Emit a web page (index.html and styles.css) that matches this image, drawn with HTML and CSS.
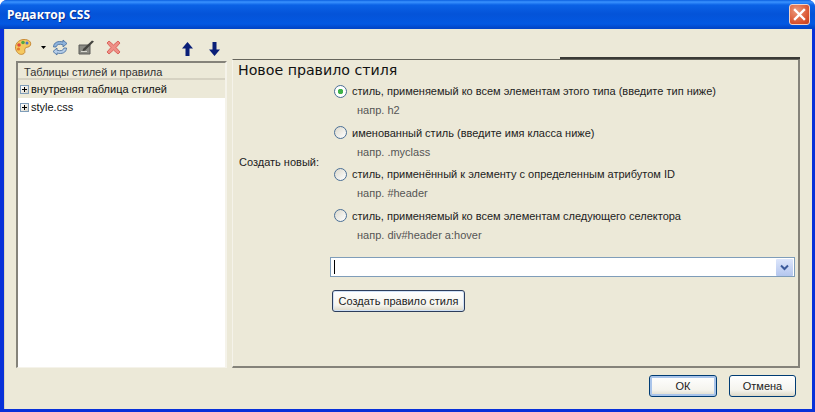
FILE: index.html
```html
<!DOCTYPE html>
<html lang="ru">
<head>
<meta charset="utf-8">
<title>Редактор CSS</title>
<link rel="stylesheet" href="styles.css">
</head>
<body>
<div class="window">
  <header class="titlebar">
    <span class="title">Редактор CSS</span>
    <span class="close"><svg width="13" height="13" viewBox="0 0 13 13"><path d="M2 2 L11 11 M11 2 L2 11" stroke="#fff" stroke-width="2.4" stroke-linecap="square"/></svg></span>
  </header>
  <div class="client">
    <div class="toolbar">
      <div class="tools-left">
        <svg class="ic-palette" width="18" height="18" viewBox="0 0 18 18"><path d="M2 12 C0 7 4 1.500 10 1.500 C15 1.500 17.500 4 16.500 7 C15.500 10 12 8.500 11 10.500 C10 12.500 12 14 10 15.500 C7 17.500 3.500 16 2 12Z" fill="#f5c95f" stroke="#c98a35"/><circle cx="5" cy="7" r="1.800" fill="#e04a3a"/><circle cx="9" cy="4.500" r="1.800" fill="#57a845"/><circle cx="13" cy="5" r="1.500" fill="#4a74c9"/><circle cx="4.500" cy="11" r="1.600" fill="#e8792c"/></svg>
        <svg class="ic-caret" width="5" height="3" viewBox="0 0 5 3"><path d="M0 0H5L2.500 3Z" fill="#000"/></svg>
        <svg class="ic-refresh" width="16" height="17" viewBox="0 0 16 17"><path d="M1.500 8 C1.500 3.500 6 1.500 11 3 L11 1 L15 4.500 L11 8 L11 5.800 C7.500 4.600 4.500 5.500 4 8Z" fill="#8fb4dc" stroke="#41699c" stroke-width=".8"/><path d="M14.500 9 C14.500 13.500 10 15.500 5 14 L5 16 L1 12.500 L5 9 L5 11.200 C8.500 12.400 11.500 11.500 12 9Z" fill="#b5cde8" stroke="#41699c" stroke-width=".8"/></svg>
        <svg class="ic-edit" width="17" height="16" viewBox="0 0 17 16"><path d="M1 6H12V15H1Z" fill="#8b8b84" stroke="#5d5d58"/><path d="M5 10 L14 1.500 L16 2.500 L7 11.500 L4.500 12Z" fill="#44443f"/><path d="M3 12.500H9" stroke="#d8d8d0"/></svg>
        <svg class="ic-delete" width="15" height="15" viewBox="0 0 15 15"><path d="M3 1 L7.500 5 L12 1 L14 3 L10 7.500 L14 12 L12 14 L7.500 10 L3 14 L1 12 L5 7.500 L1 3Z" fill="#ef8f86" stroke="#d9665c"/></svg>
      </div>
      <div class="tools-right">
        <svg width="11" height="14" viewBox="0 0 11 14"><path d="M5.500 0 L11 6.500 H7.500 V14 H3.500 V6.500 H0Z" fill="#0a1f78"/></svg>
        <svg width="11" height="14" viewBox="0 0 11 14"><path d="M5.500 14 L11 7.500 H7.500 V0 H3.500 V7.500 H0Z" fill="#0a1f78"/></svg>
      </div>
      <div class="tab-line"></div>
    </div>
    <div class="panes">
      <section class="tree">
        <div class="tree-head">Таблицы стилей и правила</div>
        <div class="tree-row selected"><span class="expander"></span>внутреняя таблица стилей</div>
        <div class="tree-row"><span class="expander"></span>style.css</div>
      </section>
      <section class="editor">
        <h1 class="heading">Новое правило стиля</h1>
        <div class="form">
          <div class="form-label">Создать новый:</div>
          <div class="options">
            <div class="option">
              <div class="option-main"><span class="radio checked"></span>стиль, применяемый ко всем элементам этого типа (введите тип ниже)</div>
              <div class="hint">напр. h2</div>
            </div>
            <div class="option">
              <div class="option-main"><span class="radio"></span>именованный стиль (введите имя класса ниже)</div>
              <div class="hint">напр. .myclass</div>
            </div>
            <div class="option">
              <div class="option-main"><span class="radio"></span>стиль, применённый к элементу с определенным атрибутом ID</div>
              <div class="hint">напр. #header</div>
            </div>
            <div class="option">
              <div class="option-main"><span class="radio"></span>стиль, применяемый ко всем элементам следующего селектора</div>
              <div class="hint">напр. div#header a:hover</div>
            </div>
          </div>
        </div>
        <div class="combo">
          <span class="caret"></span>
          <span class="combo-btn"><svg width="9" height="7" viewBox="0 0 9 7"><path d="M1 1.500 L4.500 5 L8 1.500" fill="none" stroke="#3b5a9a" stroke-width="2"/></svg></span>
        </div>
        <button class="btn create">Создать правило стиля</button>
      </section>
    </div>
    <footer class="footer">
      <button class="btn ok">ОК</button>
      <button class="btn cancel">Отмена</button>
    </footer>
  </div>
</div>
</body>
</html>
```

FILE: styles.css
```css
* { box-sizing: border-box; }
html, body { margin: 0; padding: 0; }
body {
  width: 815px;
  height: 412px;
  overflow: hidden;
  font-family: "Liberation Sans", "Noto Sans", sans-serif;
  font-size: 11px;
  color: #222;
}
.window {
  width: 815px;
  height: 412px;
  display: flex;
  flex-direction: column;
  background: #0831d9;
  border-radius: 7px 7px 0 0;
}
.titlebar {
  height: 29px;
  flex: none;
  display: flex;
  align-items: center;
  justify-content: space-between;
  padding: 0 5px 0 7px;
  border-radius: 7px 7px 0 0;
  background: linear-gradient(#0a5fe0 0, #3a93ff 2px, #0a62e6 5px, #0453d8 14px, #0358e2 24px, #0246c8 28px);
}
.title {
  font-family: "Noto Sans", "Liberation Sans", sans-serif;
  font-weight: 700;
  font-size: 12px;
  letter-spacing: .15px;
  color: #fff;
  text-shadow: 1px 1px 0 #0a2d8c;
}
.close {
  width: 21px;
  height: 21px;
  display: flex;
  align-items: center;
  justify-content: center;
  border: 1px solid #f3d3c6;
  border-radius: 3px;
  background: radial-gradient(circle at 35% 30%, #ec9a7c, #d9512c 70%, #c0401e);
}
.client {
  flex: 1;
  display: flex;
  flex-direction: column;
  margin: 0 3px 3px 4px;
  padding: 0 12px 0 11px;
  background: #ece9d8;
  border-left: 1px solid #d8d4c2;
}
.toolbar {
  position: relative;
  height: 30px;
  flex: none;
  display: flex;
  align-items: flex-end;
  padding-bottom: 3px;
}
.tools-left {
  display: flex;
  align-items: center;
  width: 163px;
}
.ic-palette { margin-left: -2px; }
.ic-caret { margin: 0 6px 0 9px; }
.ic-edit { margin-left: 10px; }
.ic-delete { margin-left: 11px; }
.tools-right { display: flex; gap: 16px; margin-left: 3px; }
.tab-line {
  position: absolute;
  right: 0;
  bottom: 0;
  width: 240px;
  height: 2px;
  background: #3a3a36;
}
.panes {
  flex: 1;
  display: flex;
  gap: 5px;
  min-height: 0;
}
.tree {
  width: 211px;
  flex: none;
  margin-top: 2px;
  background: #fff;
  border-top: 2px solid #85837a;
  border-left: 2px solid #85837a;
  border-right: 2px solid #f5f3ea;
  border-bottom: 1px solid #f5f3ea;
}
.tree-head {
  height: 17px;
  padding-left: 6px;
  line-height: 19px;
  background: #ece9d8;
  border-bottom: 2px solid #d6d2c2;
  color: #333;
}
.tree-row {
  height: 18px;
  line-height: 18px;
  display: flex;
  align-items: center;
  color: #111;
}
.tree-row.selected { background: #ece9d8; }
.expander {
  position: relative;
  width: 9px;
  height: 9px;
  margin: 0 2px 0 2px;
  border: 1px solid #7f9db9;
  background: linear-gradient(135deg, #fff, #d8d4c6);
}
.expander::before {
  content: "";
  position: absolute;
  left: 1px;
  top: 3px;
  width: 5px;
  height: 1px;
  background: #000;
}
.expander::after {
  content: "";
  position: absolute;
  left: 3px;
  top: 1px;
  width: 1px;
  height: 5px;
  background: #000;
}
.editor {
  flex: 1;
  min-width: 0;
  display: flex;
  flex-direction: column;
  align-items: flex-start;
  padding: 1px 5px 0 6px;
  border-top: 1px solid #66655c;
  border-left: 1px solid #f5f3ea;
  border-right: 2px solid #85837a;
  border-bottom: 2px solid #85837a;
}
.heading {
  margin: 0 0 0 -1px;
  height: 18px;
  font-family: "DejaVu Sans", sans-serif;
  font-weight: 400;
  font-size: 14.2px;
  line-height: 18px;
  color: #111;
}
.form {
  display: flex;
  align-items: center;
  width: 100%;
  margin-top: 3px;
}
.form-label { width: 94px; flex: none; margin-bottom: 6px; color: #222; }
.options { flex: 1; }
.option { height: 41.500px; padding-left: 1px; }
.option-main {
  height: 18px;
  display: flex;
  align-items: center;
  color: #222;
}
.radio {
  width: 13px;
  height: 13px;
  margin-right: 5px;
  border: 1px solid #4a6f96;
  border-radius: 50%;
  background: linear-gradient(135deg, #dcd9cc, #fff);
}
.radio.checked { background: radial-gradient(circle, #3fb24a 0 2.500px, #fff 3px); }
.hint { margin: 3px 0 0 23px; line-height: 15px; color: #555; }
.combo {
  position: relative;
  width: 465px;
  height: 20px;
  margin: 9px 0 0 91px;
  display: flex;
  align-items: center;
  justify-content: space-between;
  padding: 0 1px 0 3px;
  border: 1px solid #7f9db9;
  background: #fff;
}
.caret { width: 1px; height: 14px; background: #000; }
.combo-btn {
  width: 17px;
  height: 17px;
  display: flex;
  align-items: center;
  justify-content: center;
  border-radius: 1px;
  background: linear-gradient(#dde6fb, #b4c6ee);
}
.btn {
  font: inherit;
  color: #222;
  height: 22px;
  padding: 0;
  border: 1px solid #003c74;
  border-radius: 3px;
  background: linear-gradient(#fff, #f5f4ee 70%, #dcd8c8);
}
.create {
  width: 133px;
  margin: 13px 0 0 93px;
  border-color: #2c3d5c;
  box-shadow: inset 0 0 0 1px #cfe0f5;
}
.footer {
  height: 41px;
  flex: none;
  display: flex;
  justify-content: flex-end;
  align-items: flex-start;
  gap: 12px;
  padding: 7px 4px 0 0;
}
.ok { width: 68px; box-shadow: inset 0 0 0 2px #a9c4ea; }
.cancel { width: 67px; }
```
